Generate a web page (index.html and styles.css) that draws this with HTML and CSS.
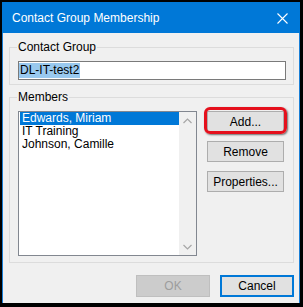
FILE: index.html
```html
<!DOCTYPE html>
<html>
<head>
<meta charset="utf-8">
<link rel="stylesheet" href="styles.css">
</head>
<body>
<div class="window">
  <div class="titlebar">
    <span class="title">Contact Group Membership</span>
    <svg class="close" width="11" height="11" viewBox="0 0 11 11"><path d="M0.5 0.5 L10.5 10.5 M10.5 0.5 L0.5 10.5" stroke="#fff" stroke-width="1.1" fill="none"/></svg>
  </div>
  <div class="content">
    <fieldset class="group group-name">
      <legend>Contact Group</legend>
      <div class="textbox"><span class="sel">DL-IT-test2</span></div>
    </fieldset>
    <fieldset class="group group-members">
      <legend>Members</legend>
      <div class="members-row">
        <div class="listbox">
          <ul class="items">
            <li class="selected">Edwards, Miriam</li>
            <li>IT Training</li>
            <li>Johnson, Camille</li>
          </ul>
          <div class="scrollbar">
            <div class="arrow"><svg width="9" height="6" viewBox="0 0 9 6"><path d="M0.5 5 L4.5 1 L8.5 5" stroke="#a6a6a6" stroke-width="1.2" fill="none"/></svg></div>
            <div class="arrow"><svg width="9" height="6" viewBox="0 0 9 6"><path d="M0.5 1 L4.5 5 L8.5 1" stroke="#a6a6a6" stroke-width="1.2" fill="none"/></svg></div>
          </div>
        </div>
        <div class="side-buttons">
          <button class="btn btn-add">Add...<span class="callout"></span></button>
          <button class="btn">Remove</button>
          <button class="btn">Properties...</button>
        </div>
      </div>
    </fieldset>
    <div class="footer">
      <button class="btn btn-footer btn-disabled">OK</button>
      <button class="btn btn-footer btn-default">Cancel</button>
    </div>
  </div>
</div>
</body>
</html>
```
FILE: styles.css
```css
* { box-sizing: border-box; }
html, body { margin: 0; padding: 0; background: #000; }
body {
  font-family: "Liberation Sans", Arial, sans-serif;
  font-size: 12px;
  color: #000;
  padding: 2px 3px 4px 2px;
  width: 303px;
  height: 307px;
  overflow: hidden;
}
.window {
  width: 298px;
  height: 301px;
  background: #f0f0f0;
  border-left: 1px solid #1a7fd6;
  border-right: 1px solid #1a7fd6;
  display: flex;
  flex-direction: column;
}
.titlebar {
  height: 31px;
  margin: 0 -1px;
  background: #0078d7;
  color: #fff;
  display: flex;
  align-items: center;
  justify-content: space-between;
  padding: 0 12px 0 10px;
  flex: none;
}
.title { font-size: 12px; line-height: 14px; }
.close { display: block; margin-top: 1px; }
.content {
  padding: 7px 5px 0 6px;
  display: flex;
  flex-direction: column;
}
.group {
  margin: 0;
  width: 285px;
  border: 1px solid #dcdcdc;
  min-width: 0;
}
.group legend {
  padding: 0 1px;
  margin-left: -1px;
  line-height: 14px;
  font-size: 12px;
}
.group-name { padding: 7px 7px 4px 8px; }
.group-members { margin-top: 5px; padding: 7px 7px 6px 8px; }
.textbox {
  width: 268px;
  height: 19px;
  border: 1px solid #7a7a7a;
  background: #fff;
  padding: 1px 0 0 0;
}
.sel {
  display: inline-block;
  background: #99c9ef;
  line-height: 15px;
  padding: 0 1px;
}
.members-row { display: flex; align-items: flex-start; }
.listbox {
  width: 179px;
  height: 145px;
  border: 1px solid #828790;
  background: #fff;
  display: flex;
}
.items {
  list-style: none;
  margin: 0;
  padding: 0 0 0 1px;
  width: 160px;
}
.items li {
  line-height: 13px;
  height: 13px;
  padding-left: 2px;
  white-space: nowrap;
}
.items li.selected { background: #0078d7; color: #fff; }
.scrollbar {
  width: 17px;
  margin-left: auto;
  background: #f0f0f0;
  display: flex;
  flex-direction: column;
  justify-content: space-between;
}
.arrow {
  height: 17px;
  display: flex;
  align-items: center;
  justify-content: center;
}
.arrow svg { display: block; }
.side-buttons {
  margin-left: 10px;
  display: flex;
  flex-direction: column;
  gap: 9px;
}
.btn {
  font-family: inherit;
  font-size: 12px;
  color: #000;
  background: #e1e1e1;
  border: 1px solid #adadad;
  padding: 0;
  margin: 0;
  width: 77px;
  height: 21px;
  line-height: 14px;
}
.btn-add { position: relative; }
.callout {
  position: absolute;
  left: -4px;
  top: -5px;
  width: 83px;
  height: 27px;
  border: 3px solid #e5101c;
  border-radius: 6px;
  box-shadow: 1px 1px 2px rgba(0,0,0,0.55);
}
.footer {
  margin-top: 12px;
  display: flex;
  justify-content: flex-end;
  gap: 10px;
}
.btn-footer { width: 74px; height: 22px; }
.btn-disabled { background: #cccccc; border-color: #bfbfbf; color: #9d9d9d; }
.btn-default { border: 2px solid #0078d7; }
```
